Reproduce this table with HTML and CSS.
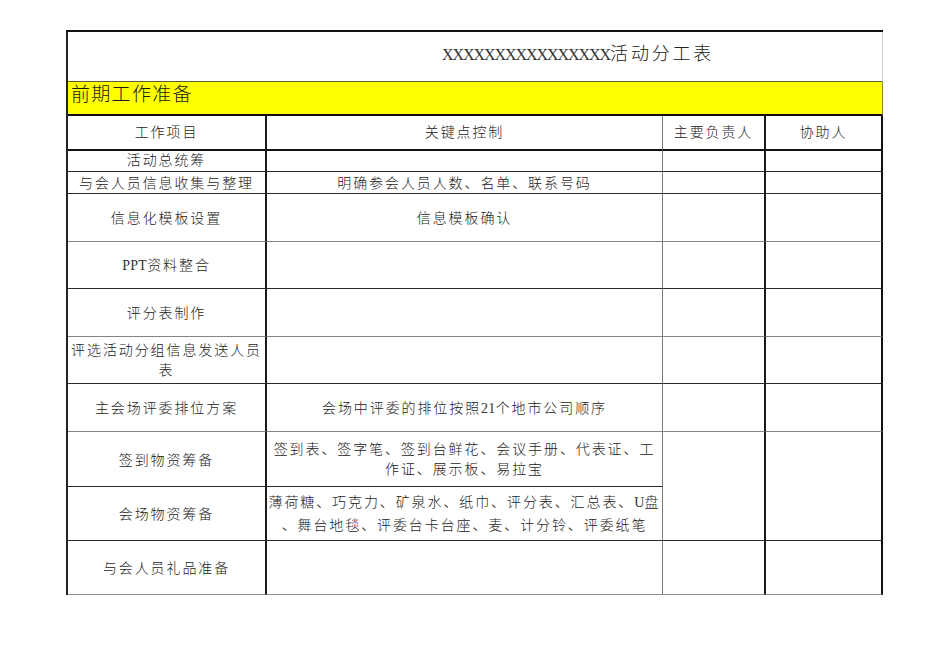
FILE: index.html
```html
<!DOCTYPE html>
<html lang="zh-CN">
<head>
<meta charset="utf-8">
<title>活动分工表</title>
<link rel="stylesheet" href="styles.css">
</head>
<body>
<div class="sheet">
  <div class="title"><span class="xs">XXXXXXXXXXXXXXXX</span><span class="cn">活动分工表</span></div>
  <div class="section">前期工作准备</div>

  <div class="cell c1 head"><span class="t">工作项目</span></div>
  <div class="cell c2 head"><span class="t">关键点控制</span></div>
  <div class="cell c3 head"><span class="t">主要负责人</span></div>
  <div class="cell c4 head"><span class="t">协助人</span></div>

  <div class="cell c1 short"><span class="t">活动总统筹</span></div>
  <div class="cell c2"></div>
  <div class="cell c3"></div>
  <div class="cell c4"></div>

  <div class="cell c1"><span class="t">与会人员信息收集与整理</span></div>
  <div class="cell c2"><span class="t">明确参会人员人数、名单、联系号码</span></div>
  <div class="cell c3"></div>
  <div class="cell c4"></div>

  <div class="cell c1 grey"><span class="t">信息化模板设置</span></div>
  <div class="cell c2 grey"><span class="t">信息模板确认</span></div>
  <div class="cell c3 grey"></div>
  <div class="cell c4 grey"></div>

  <div class="cell c1"><span class="t"><span class="lat">PPT</span>资料整合</span></div>
  <div class="cell c2"></div>
  <div class="cell c3"></div>
  <div class="cell c4"></div>

  <div class="cell c1 grey"><span class="t">评分表制作</span></div>
  <div class="cell c2 grey"></div>
  <div class="cell c3 grey"></div>
  <div class="cell c4 grey"></div>

  <div class="cell c1"><span class="t two">评选活动分组信息发送人员<br>表</span></div>
  <div class="cell c2"></div>
  <div class="cell c3"></div>
  <div class="cell c4"></div>

  <div class="cell c1 grey"><span class="t">主会场评委排位方案</span></div>
  <div class="cell c2 grey"><span class="t">会场中评委的排位按照<span class="lat">21</span>个地市公司顺序</span></div>
  <div class="cell c3 grey"></div>
  <div class="cell c4 grey"></div>

  <div class="cell c1"><span class="t">签到物资筹备</span></div>
  <div class="cell c2"><span class="t two">签到表、签字笔、签到台鲜花、会议手册、代表证、工<br>作证、展示板、易拉宝</span></div>
  <div class="cell c3 tall"></div>
  <div class="cell c4 tall"></div>

  <div class="cell c1"><span class="t">会场物资筹备</span></div>
  <div class="cell c2"><span class="t two">薄荷糖、巧克力、矿泉水、纸巾、评分表、汇总表、<span class="lat">U</span>盘<br>、舞台地毯、评委台卡台座、麦、计分铃、评委纸笔</span></div>

  <div class="cell c1 last"><span class="t">与会人员礼品准备</span></div>
  <div class="cell c2 last"></div>
  <div class="cell c3 last"></div>
  <div class="cell c4 last"></div>
</div>
</body>
</html>
```

FILE: styles.css
```css
html, body {
  margin: 0;
  padding: 0;
  background: #ffffff;
}

body {
  font-family: "Liberation Serif", "Noto Sans CJK SC", serif;
  color: #222222;
}

.sheet {
  margin: 30px 0 0 66px;
  width: 815px;
  display: grid;
  grid-template-columns: 199px 396px 103px 117px;
  grid-template-rows: 50px 34px 35px 21px 22px 48px 47px 48px 47px 48px 55px 54px 54px;
  border-top: 2px solid #111111;
  border-left: 2px solid #222222;
  box-sizing: content-box;
}

.title {
  grid-column: 1 / 5;
  box-sizing: border-box;
  border-right: 1px solid #d0d0d0;
  border-bottom: 1px solid #5e5e3c;
  padding: 8px 0 0 374px;
  line-height: 24px;
  white-space: nowrap;
}

.title .xs {
  font-family: "Liberation Serif", serif;
  font-size: 16px;
  letter-spacing: -1.05px;
  color: #333333;
}

.title .cn {
  font-family: "Noto Sans CJK SC", sans-serif;
  font-size: 18px;
  letter-spacing: 2.8px;
  font-weight: 300;
}

.section {
  grid-column: 1 / 5;
  box-sizing: border-box;
  background: #ffff00;
  border-right: 1px solid #8a8a40;
  border-bottom: 2px solid #111111;
  padding: 0 0 0 3px;
  line-height: 22px;
  font-family: "Noto Sans CJK SC", sans-serif;
  font-size: 19px;
  letter-spacing: 1.3px;
  font-weight: 300;
  color: #1a1a1a;
}

.cell {
  box-sizing: border-box;
  display: flex;
  align-items: center;
  justify-content: center;
  border-bottom: 1px solid #2a2a2a;
  border-right: 1px solid #2a2a2a;
}

.t {
  display: block;
  text-align: center;
  font-family: "Noto Sans CJK SC", sans-serif;
  font-size: 14px;
  line-height: 17px;
  letter-spacing: 1.9px;
  font-weight: 300;
  white-space: nowrap;
}

.t.two {
  line-height: 20.5px;
  margin-bottom: 2px;
}

.t .lat {
  font-family: "Liberation Serif", serif;
  font-weight: 400;
  letter-spacing: 0.3px;
  color: #333333;
}

.c1 {
  border-right: 2px solid #1a1a1a;
}

.c2 {
  border-right: 1px solid #7a7a7a;
}

.c3 {
  border-right: 2px solid #1a1a1a;
}

.c4 {
  border-right: 2px solid #111111;
}

.head {
  border-bottom: 2px solid #111111;
  padding-bottom: 3px;
}

.short {
  padding-bottom: 4px;
}

.grey {
  border-bottom-color: #858585;
}

.tall {
  grid-row: span 2;
}

.last {
  border-bottom: 1px solid #8f8f8f;
}
```
